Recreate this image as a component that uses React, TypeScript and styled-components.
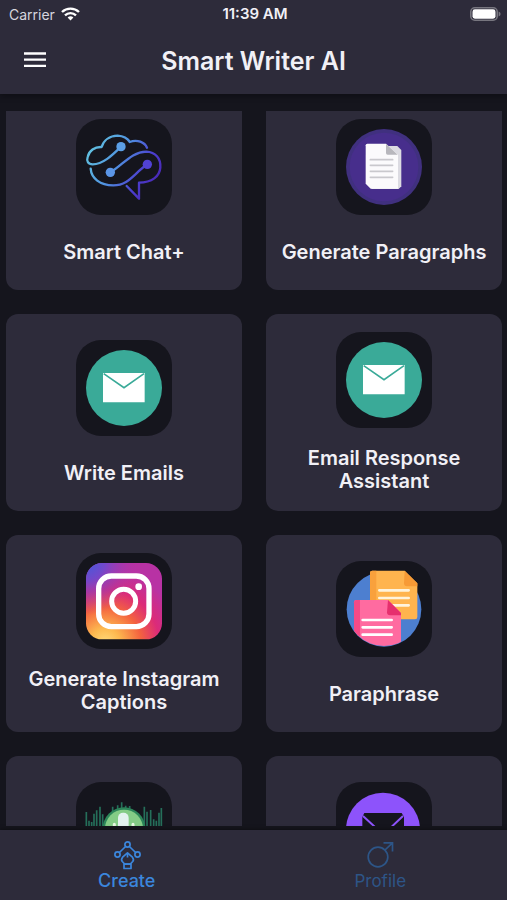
import { useLayoutEffect, useRef, useState } from "react";
import type { ReactNode } from "react";
import styled, { createGlobalStyle } from "styled-components";

const color = {
  page: "#15151d",
  surface: "#2d2b3a",
  text: "#f1f0f6",
  active: "#3b86dc",
  idle: "#2d5587",
};

const GlobalStyle = createGlobalStyle`
  *, *::before, *::after { box-sizing: border-box; }
  body {
    margin: 0;
    background: ${color.page};
    color: ${color.text};
    font-family: Inter, "Liberation Sans", sans-serif;
  }
  button { font: inherit; color: inherit; border: 0; padding: 0; background: none; cursor: pointer; }
`;

const Screen = styled.div`
  display: flex;
  flex-direction: column;
  height: 100vh;
  overflow: hidden;
`;

const Header = styled.header`
  flex: none;
  background: ${color.surface};
  box-shadow: 0 2px 6px rgba(0, 0, 0, 0.35);
`;

const StatusBar = styled.div`
  display: grid;
  grid-template-columns: 1fr auto 1fr;
  align-items: center;
  height: 28px;
  padding: 0 6px 0 9px;
  font-size: 14px;
`;

const Carrier = styled.span`
  display: flex;
  align-items: center;
  gap: 6px;
  color: #d6d5de;
`;

const Clock = styled.time`
  font-size: 15px;
  line-height: 18px;
  font-weight: 600;
`;

const BatteryIcon = styled.svg`
  justify-self: end;
`;

const AppBar = styled.div`
  display: grid;
  grid-template-columns: 1fr auto 1fr;
  align-items: center;
  height: 66px;
  padding: 0 23px;
`;

const MenuButton = styled.button`
  display: flex;
  justify-self: start;
`;

const Title = styled.h1`
  margin: 0;
  font-size: 25px;
  line-height: 30px;
  font-weight: 600;
`;

const Main = styled.main`
  display: flex;
  flex: 1;
  min-height: 0;
  padding: 17px 5px 4px 6px;
`;

const ScrollArea = styled.div`
  flex: 1;
  overflow-y: auto;
  scrollbar-width: none;
`;

const CardGrid = styled.div`
  display: grid;
  grid-template-columns: 1fr 1fr;
  grid-auto-rows: 197px;
  gap: 24px;
`;

const Card = styled.button`
  display: flex;
  flex-direction: column;
  align-items: center;
  justify-content: space-evenly;
  padding: 0 12px;
  border-radius: 12px;
  background: ${color.surface};
`;

const Tile = styled.svg`
  width: 96px;
  height: 96px;
  border-radius: 25px;
  background: ${color.page};
`;

const CardLabel = styled.span`
  min-height: 23px;
  font-size: 20px;
  line-height: 23px;
  font-weight: 600;
  text-align: center;
`;

const TabBar = styled.nav`
  display: grid;
  grid-template-columns: 1fr 1fr;
  flex: none;
  height: 70px;
  background: ${color.surface};
  box-shadow: 0 -1px 4px rgba(0, 0, 0, 0.35);
`;

const Tab = styled.button<{ $active: boolean }>`
  && { color: ${(p) => (p.$active ? color.active : color.idle)}; }
  && { font-size: ${(p) => (p.$active ? 18 : 17)}px; }
  && { font-weight: ${(p) => (p.$active ? 500 : 400)}; }
  display: flex;
  flex-direction: column;
  align-items: center;
  padding-top: 10px;
  line-height: 22px;
`;

function ChatArt() {
  return (
    <Tile viewBox="18 27 288 288" fill="none" aria-hidden="true">
      <defs>
        <linearGradient id="chat" gradientUnits="userSpaceOnUse" x1="50" y1="110" x2="250" y2="220">
          <stop offset="0" stopColor="#63c6e0" />
          <stop offset="0.45" stopColor="#5092e0" />
          <stop offset="0.8" stopColor="#4b3fd0" />
          <stop offset="1" stopColor="#4a2bb8" />
        </linearGradient>
      </defs>
      <g stroke="url(#chat)" strokeWidth="7" strokeLinecap="round" strokeLinejoin="round">
        <path d="M153 110C126 137 98 163 68 163C54 163 49 153 53 141C57 122 74 110 95 111C101 91 119 78 143 77C160 78 172 84 179 96C202 87 224 97 231 113" />
        <path d="M62 176C64 205 90 226 130 226C176 226 191 191 232 163" />
        <path d="M121 187C158 166 184 125 229 125C256 126 273 145 271 173C269 199 246 218 207 218V266L170 228" />
      </g>
      <circle cx="153" cy="110" r="14" fill="#5b9fe6" />
      <circle cx="121" cy="187" r="14" fill="#5b95e6" />
      <circle cx="232" cy="163" r="14" fill="#5142d4" />
    </Tile>
  );
}

function ParagraphArt() {
  return (
    <Tile viewBox="18 27 288 288" aria-hidden="true">
      <circle cx="162" cy="171" r="114" fill="#40307f" />
      <circle cx="162" cy="171" r="103" fill="#472e8c" />
      <path d="M122 108H202L214 120V229L206 237H126L118 229Z" fill="#dcdbe2" />
      <path d="M112 101H168L204 134V236H122L107 221V106Q107 101 112 101Z" fill="#fbfafc" />
      <path d="M168 101L203 134H173Q168 134 168 129Z" fill="#b8b7bd" />
      <path d="M121 149H188M121 166H188M121 184H188M121 202H188" stroke="#c9c8cd" strokeWidth="5" strokeLinecap="round" />
    </Tile>
  );
}

function EmailArt() {
  return (
    <Tile viewBox="18 30 288 288" aria-hidden="true">
      <circle cx="162" cy="174" r="114" fill="#3aaa98" />
      <path d="M99 129H224V217H99Z" fill="#fff" />
      <path d="M101 131L162 173L222 131" fill="none" stroke="#3aaa98" strokeWidth="5" />
    </Tile>
  );
}

function InstagramArt() {
  return (
    <Tile viewBox="18 14 288 288" aria-hidden="true">
      <defs>
        <radialGradient id="igWarm" gradientUnits="userSpaceOnUse" cx="105" cy="285" r="225">
          <stop offset="0" stopColor="#ffdc7d" />
          <stop offset="0.2" stopColor="#fdb94f" />
          <stop offset="0.48" stopColor="#f4633f" />
          <stop offset="0.72" stopColor="#dc2b78" />
          <stop offset="1" stopColor="#b832a4" />
        </radialGradient>
        <radialGradient id="igCool" gradientUnits="userSpaceOnUse" cx="48" cy="40" r="160">
          <stop offset="0" stopColor="#3f5bdc" />
          <stop offset="0.35" stopColor="#6a4bd0" stopOpacity="0.9" />
          <stop offset="1" stopColor="#b832a4" stopOpacity="0" />
        </radialGradient>
      </defs>
      <rect x="48" y="44" width="228" height="229" rx="48" fill="url(#igWarm)" />
      <rect x="48" y="44" width="228" height="229" rx="48" fill="url(#igCool)" />
      <g fill="none" stroke="#fff">
        <rect x="86" y="83" width="151" height="152" rx="38" strokeWidth="16" />
        <circle cx="161" cy="159" r="36" strokeWidth="15" />
      </g>
      <circle cx="206" cy="115" r="10" fill="#fff" />
    </Tile>
  );
}

function ParaphraseArt() {
  return (
    <Tile viewBox="18 18 288 288" aria-hidden="true">
      <defs>
        <clipPath id="sheetClip">
          <path d="M40 20H280V162H273A111 111 0 0 1 51 162H40Z" />
        </clipPath>
      </defs>
      <circle cx="162" cy="163" r="112" fill="#4d7fd0" />
      <path d="M127 47H224L262 85V186Q262 193 255 193H127Q120 193 120 186V54Q120 47 127 47Z" fill="#ffb44e" />
      <path d="M127 47H139V193H127Q120 193 120 186V54Q120 47 127 47Z" fill="#f9a13c" />
      <path d="M224 47L262 85V94H231Q222 94 222 85Z" fill="#f79a35" />
      <path d="M148 106H236M148 129H236M148 151H236" stroke="#fff3dc" strokeWidth="8" strokeLinecap="round" />
      <g clipPath="url(#sheetClip)">
        <path d="M79 135H174L213 174V280H72V142Q72 135 79 135Z" fill="#ff6ba0" />
        <path d="M79 135H90V280H72V142Q72 135 79 135Z" fill="#f64a86" />
        <path d="M174 135L213 174V181H180Q171 181 171 172Z" fill="#e62f6e" />
      </g>
      <path d="M98 195H185M98 217H185M98 239H185" stroke="#fff" strokeWidth="8" strokeLinecap="round" />
    </Tile>
  );
}

function VoiceArt() {
  return (
    <Tile viewBox="48 36 288 288" aria-hidden="true">
      <path
        d="M79 126V230M87 152V210M95 156V206M102 131V228M110 121V236M120 110V246M128 133V220M158 110V252M173 106V256M185 97V262M197 107V254M209 108V252M253 110V262M261 125V246M272 120V248M281 148V212M289 152V220M297 128V230M304 114V240"
        stroke="#256f5a"
        strokeWidth="5"
      />
      <circle cx="192" cy="176" r="64" fill="#2c8559" />
      <circle cx="192" cy="176" r="57" fill="#84cc86" />
      <rect x="174" y="128" width="32" height="70" rx="15" fill="#e3f2ef" />
      <path d="M163 163V180A29 29 0 0 0 219 180V163M191 210V226" fill="none" stroke="#e7f8e2" strokeWidth="9" strokeLinecap="round" />
    </Tile>
  );
}

function NewsletterArt() {
  return (
    <Tile viewBox="48 36 288 288" aria-hidden="true">
      <circle cx="189" cy="179" r="111" fill="#8d53fb" />
      <path d="M133 129H245L252 141V222H127V141Z" fill={color.page} />
      <path d="M129 138L190 194L249 138" fill="none" stroke="#8d53fb" strokeWidth="6" />
    </Tile>
  );
}

function CreateIcon() {
  return (
    <svg width="30" height="30" viewBox="0 0 30 30" fill="none" stroke="currentColor" strokeWidth="1.7" strokeLinejoin="round" aria-hidden="true">
      <circle cx="15.5" cy="4.5" r="2.6" />
      <circle cx="5.5" cy="14.5" r="2.6" />
      <circle cx="25.500" cy="14.5" r="2.6" />
      <path d="M13.6 6.5L7.4 12.5M17.4 6.5L23.6 12.5" />
      <path d="M15.5 12.8L10.6 17.2Q8.700 19.6 10.3 21.500L12.6 24H18.4L20.700 21.5Q22.300 19.6 20.4 17.200Z" />
      <path d="M15.5 13.500V17.500M12 24.200H19V28.500H12Z" />
    </svg>
  );
}

function ProfileIcon() {
  return (
    <svg width="30" height="30" viewBox="0 0 30 30" fill="none" stroke="currentColor" strokeWidth="1.7" aria-hidden="true">
      <circle cx="13" cy="17" r="9.8" />
      <path d="M20 10L27.5 2.8M18.5 2.8H27.5V11.5" />
    </svg>
  );
}

type Tool = { name: string; caption?: string; art: ReactNode };

const tools: Tool[] = [
  { name: "chat", caption: "Smart Chat+", art: <ChatArt /> },
  { name: "paragraphs", caption: "Generate Paragraphs", art: <ParagraphArt /> },
  { name: "emails", caption: "Write Emails", art: <EmailArt /> },
  { name: "responses", caption: "Email Response Assistant", art: <EmailArt /> },
  { name: "instagram", caption: "Generate Instagram Captions", art: <InstagramArt /> },
  { name: "paraphrase", caption: "Paraphrase", art: <ParaphraseArt /> },
  { name: "voice", art: <VoiceArt /> },
  { name: "newsletter", art: <NewsletterArt /> },
];

const INITIAL_SCROLL = 18;

export default function App() {
  const scroller = useRef<HTMLDivElement>(null);
  const [tab, setTab] = useState("Create");

  useLayoutEffect(() => {
    if (scroller.current) scroller.current.scrollTop = INITIAL_SCROLL;
  }, []);

  return (
    <Screen>
      <GlobalStyle />
      <Header>
        <StatusBar>
          <Carrier>
            Carrier
            <svg width="19" height="14" viewBox="0 0 19 14" fill="none" stroke="#fff" strokeWidth="2.4" aria-hidden="true">
              <path d="M1 5A12.3 12.3 0 0 1 18 5" />
              <path d="M4 8.3A8 8 0 0 1 15 8.3" />
              <path d="M9.5 13.5L6.6 10.6A4.2 4.2 0 0 1 12.4 10.6Z" fill="#fff" stroke="none" />
            </svg>
          </Carrier>
          <Clock>11:39 AM</Clock>
          <BatteryIcon width="31" height="14" viewBox="0 0 31 14" aria-hidden="true">
            <rect x="0.8" y="0.8" width="26.4" height="12.4" rx="4" fill="none" stroke="#77767f" strokeWidth="1.6" />
            <rect x="2.5" y="2.3" width="23" height="9.4" rx="2.4" fill="#fff" />
            <path d="M28.6 4.5Q30.6 5.3 30.6 7T28.6 9.5Z" fill="#77767f" />
          </BatteryIcon>
        </StatusBar>
        <AppBar>
          <MenuButton type="button" aria-label="Menu">
            <svg width="24" height="24" viewBox="0 0 24 24" stroke="#fff" strokeWidth="2.3" aria-hidden="true">
              <path d="M1 4.5H23M1 10.7H23M1 16.9H23" />
            </svg>
          </MenuButton>
          <Title>Smart Writer AI</Title>
        </AppBar>
      </Header>
      <Main>
        <ScrollArea ref={scroller}>
          <CardGrid>
            {tools.map((tool) => (
              <Card key={tool.name} type="button" aria-label={tool.caption ?? tool.name}>
                {tool.art}
                <CardLabel>{tool.caption}</CardLabel>
              </Card>
            ))}
          </CardGrid>
        </ScrollArea>
      </Main>
      <TabBar>
        <Tab type="button" $active={tab === "Create"} onClick={() => setTab("Create")}>
          <CreateIcon />
          Create
        </Tab>
        <Tab type="button" $active={tab === "Profile"} onClick={() => setTab("Profile")}>
          <ProfileIcon />
          Profile
        </Tab>
      </TabBar>
    </Screen>
  );
}
